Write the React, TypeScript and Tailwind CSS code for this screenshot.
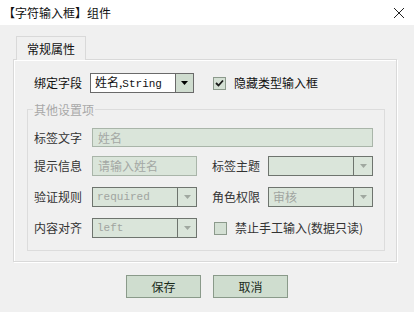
import React from "react";

const FONT = { fontFamily: '"Noto Sans CJK SC", "Noto Sans", sans-serif' };

function Arrow({ disabled }: { disabled?: boolean }) {
  return (
    <svg width="7" height="4" viewBox="0 0 7 4">
      <polygon points="0,0 7,0 3.5,4" fill={disabled ? "#a0a8a0" : "#000"} />
    </svg>
  );
}

function Combo({
  w,
  text,
  disabled,
  mono,
  btn = 19,
}: {
  w: number;
  text: React.ReactNode;
  disabled?: boolean;
  mono?: boolean;
  btn?: number;
}) {
  return (
    <div
      className={`flex h-[20px] border ${disabled ? "border-[#6e746e] bg-[#dae5da]" : "border-[#6a6a6a] bg-white"}`}
      style={{ width: w }}
    >
      <div
        className={`flex-1 flex items-center pl-[4px] text-[12px] leading-none ${disabled ? "text-[#a0a4a0]" : "text-[#111]"}`}
      >
        {text}
      </div>
      <div
        className={`flex items-center justify-center border-l ${disabled ? "border-[#6e746e]" : "border-[#6a6a6a] bg-[#cfdccf]"}`}
        style={{ width: btn }}
      >
        <Arrow disabled={disabled} />
      </div>
    </div>
  );
}

function TextBox({ w, h = 20, text }: { w: number; h?: number; text?: string }) {
  return (
    <div
      className="flex items-center border border-[#a9b5a9] bg-[#dae5da] pl-[5px] text-[12px] leading-none text-[#a4a8a4]"
      style={{ width: w, height: h }}
    >
      {text}
    </div>
  );
}

function Check({ checked }: { checked?: boolean }) {
  return (
    <div className="flex h-[13px] w-[13px] items-center justify-center border border-[#8c9a8c] bg-[#d4e0d4]">
      {checked && (
        <svg width="9" height="8" viewBox="0 0 9 8">
          <path d="M1 4 L3.5 6.5 L8 1.5" stroke="#1a1a1a" strokeWidth="1.8" fill="none" />
        </svg>
      )}
    </div>
  );
}

const mono = { fontFamily: '"Liberation Mono", monospace', fontSize: 11 };

export default function App() {
  return (
    <div className="h-[312px] w-[414px] overflow-hidden bg-[#f0f0f0] text-[12px]" style={FONT}>
      {/* Title bar */}
      <div className="flex h-[25px] items-center justify-between bg-white pl-[3px] pr-[9px]">
        <span className="text-[12px] text-[#111]">【字符输入框】组件</span>
        <svg width="12" height="12" viewBox="0 0 12 12">
          <path d="M1 1 L11 11 M11 1 L1 11" stroke="#222" strokeWidth="1" />
        </svg>
      </div>

      {/* Tab header */}
      <div className="relative z-10 ml-[16px] mt-[11px] flex h-[24px] w-[70px] items-center justify-center border-l border-r border-t border-[#d9d9d9] bg-[#f0f0f0] text-[12px] text-[#111] -mb-px">
        常规属性
      </div>

      {/* Tab panel */}
      <div className="ml-[13px] h-[203px] w-[384px] border border-[#d9d9d9] shadow-[1px_1px_0_#ffffff,inset_1px_1px_0_#ffffff] pt-[13px]">
        <div className="flex items-center pl-[20px]">
          <span className="w-[56px] text-[#111]">绑定字段</span>
          <Combo
            w={104}
            btn={18}
            text={
              <span>
                姓名,<span style={mono}>String</span>
              </span>
            }
          />
          <div className="ml-[19px] flex items-center">
            <Check checked />
            <span className="ml-[8px] text-[#111]">隐藏类型输入框</span>
          </div>
        </div>

        {/* Group */}
        <div className="relative ml-[13px] mt-[16px] h-[142px] w-[358px] border border-[#dcdcdc] pl-[6px] pt-[18px]">
          <span className="absolute left-[5px] top-[-9px] bg-[#f0f0f0] px-[1px] text-[#a8a8a8]">其他设置项</span>

          <div className="flex items-center">
            <span className="w-[58px] text-[#333]">标签文字</span>
            <TextBox w={281} h={19} text="姓名" />
          </div>

          <div className="mt-[9px] flex items-center">
            <span className="w-[58px] text-[#333]">提示信息</span>
            <TextBox w={105} text="请输入姓名" />
            <span className="ml-[15px] w-[56px] text-[#333]">标签主题</span>
            <Combo w={105} text="" disabled />
          </div>

          <div className="mt-[11px] flex items-center">
            <span className="w-[58px] text-[#333]">验证规则</span>
            <Combo w={105} text={<span style={mono}>required</span>} disabled />
            <span className="ml-[15px] w-[56px] text-[#333]">角色权限</span>
            <Combo w={105} text="审核" disabled />
          </div>

          <div className="mt-[11px] flex items-center">
            <span className="w-[58px] text-[#333]">内容对齐</span>
            <Combo w={105} text={<span style={mono}>left</span>} disabled />
            <div className="ml-[17px] flex items-center">
              <Check />
              <span className="ml-[8px] text-[#333]">禁止手工输入(数据只读)</span>
            </div>
          </div>
        </div>
      </div>

      {/* Buttons */}
      <div className="mt-[13px] flex justify-center gap-[12px]">
        <button className="h-[23px] w-[75px] border border-[#8a9a8a] bg-[#cfddcf] text-[12px] text-[#1a2a1a]">保存</button>
        <button className="h-[23px] w-[75px] border border-[#8a9a8a] bg-[#cfddcf] text-[12px] text-[#1a2a1a]">取消</button>
      </div>
    </div>
  );
}
